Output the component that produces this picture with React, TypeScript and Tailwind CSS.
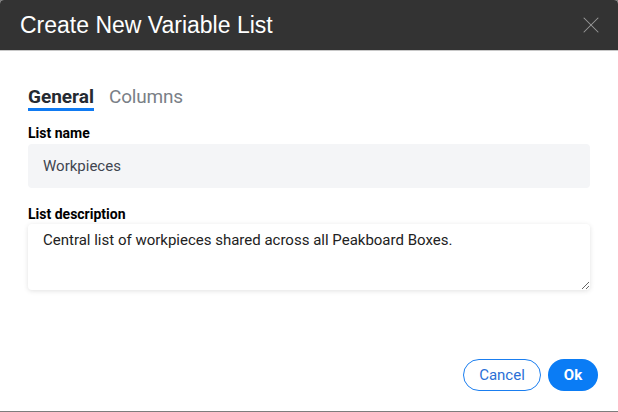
import { X } from 'lucide-react';

export default function App() {
    return (
        <div className="w-[618px] h-[412px] bg-[#7d7d7d] overflow-hidden" style={{ fontFamily: 'Roboto, "Liberation Sans", sans-serif' }}>
            <div className="w-[618px] h-[411px] bg-white rounded-t-[4px] overflow-hidden flex flex-col">
                {/* Header */}
                <div className="h-[51px] bg-[#333333] border-b border-[#c8c8c8] flex items-center justify-between pl-[20px] pr-[13px] shrink-0">
                    <h1 className="text-white text-[23px] font-normal pt-[1px]" style={{ fontFamily: '"Liberation Sans", Arial, sans-serif' }}>
                        Create New Variable List
                    </h1>
                    <X className="w-[28px] h-[28px] text-[#9a9a9a]" strokeWidth={0.9} />
                </div>

                {/* Body */}
                <div className="flex-1 flex flex-col px-[28px] pt-[35px]">
                    <div className="flex gap-[15px] items-end">
                        <div className="flex flex-col">
                            <span className="text-[19px] font-bold text-[#252a31] leading-[22px]">General</span>
                            <div className="h-[3px] bg-[#0f7af2]" />
                        </div>
                        <div className="flex flex-col">
                            <span className="text-[19px] text-[#7a7f87] leading-[22px] tracking-[-0.2px]">Columns</span>
                            <div className="h-[3px]" />
                        </div>
                    </div>

                    <label className="mt-[13px] text-[14px] font-bold text-black leading-[18px]">List name</label>
                    <div className="mt-[2px] h-[44px] bg-[#f4f5f7] rounded-[4px] flex items-center pl-[15px] text-[15px] text-[#3f4550]">
                        Workpieces
                    </div>

                    <label className="mt-[17px] text-[14px] font-bold text-black leading-[18px]">List description</label>
                    <textarea
                        className="mt-[1px] h-[66px] bg-white rounded-[4px] shadow-[0_1px_5px_rgba(0,0,0,0.12)] pl-[15px] pt-[5px] text-[15px] text-[#222] outline-none"
                        defaultValue="Central list of workpieces shared across all Peakboard Boxes."
                    />

                    <div className="mt-auto mb-[20px] -mr-[8px] flex justify-end gap-[7px]">
                        <button className="h-[32px] w-[78px] rounded-full border border-[#1a7ef0] text-[#2a6fd6] text-[15px]">
                            Cancel
                        </button>
                        <button className="h-[32px] w-[50px] rounded-full bg-[#0a7cf5] text-white text-[15px] font-bold">
                            Ok
                        </button>
                    </div>
                </div>
            </div>
        </div>
    );
}
